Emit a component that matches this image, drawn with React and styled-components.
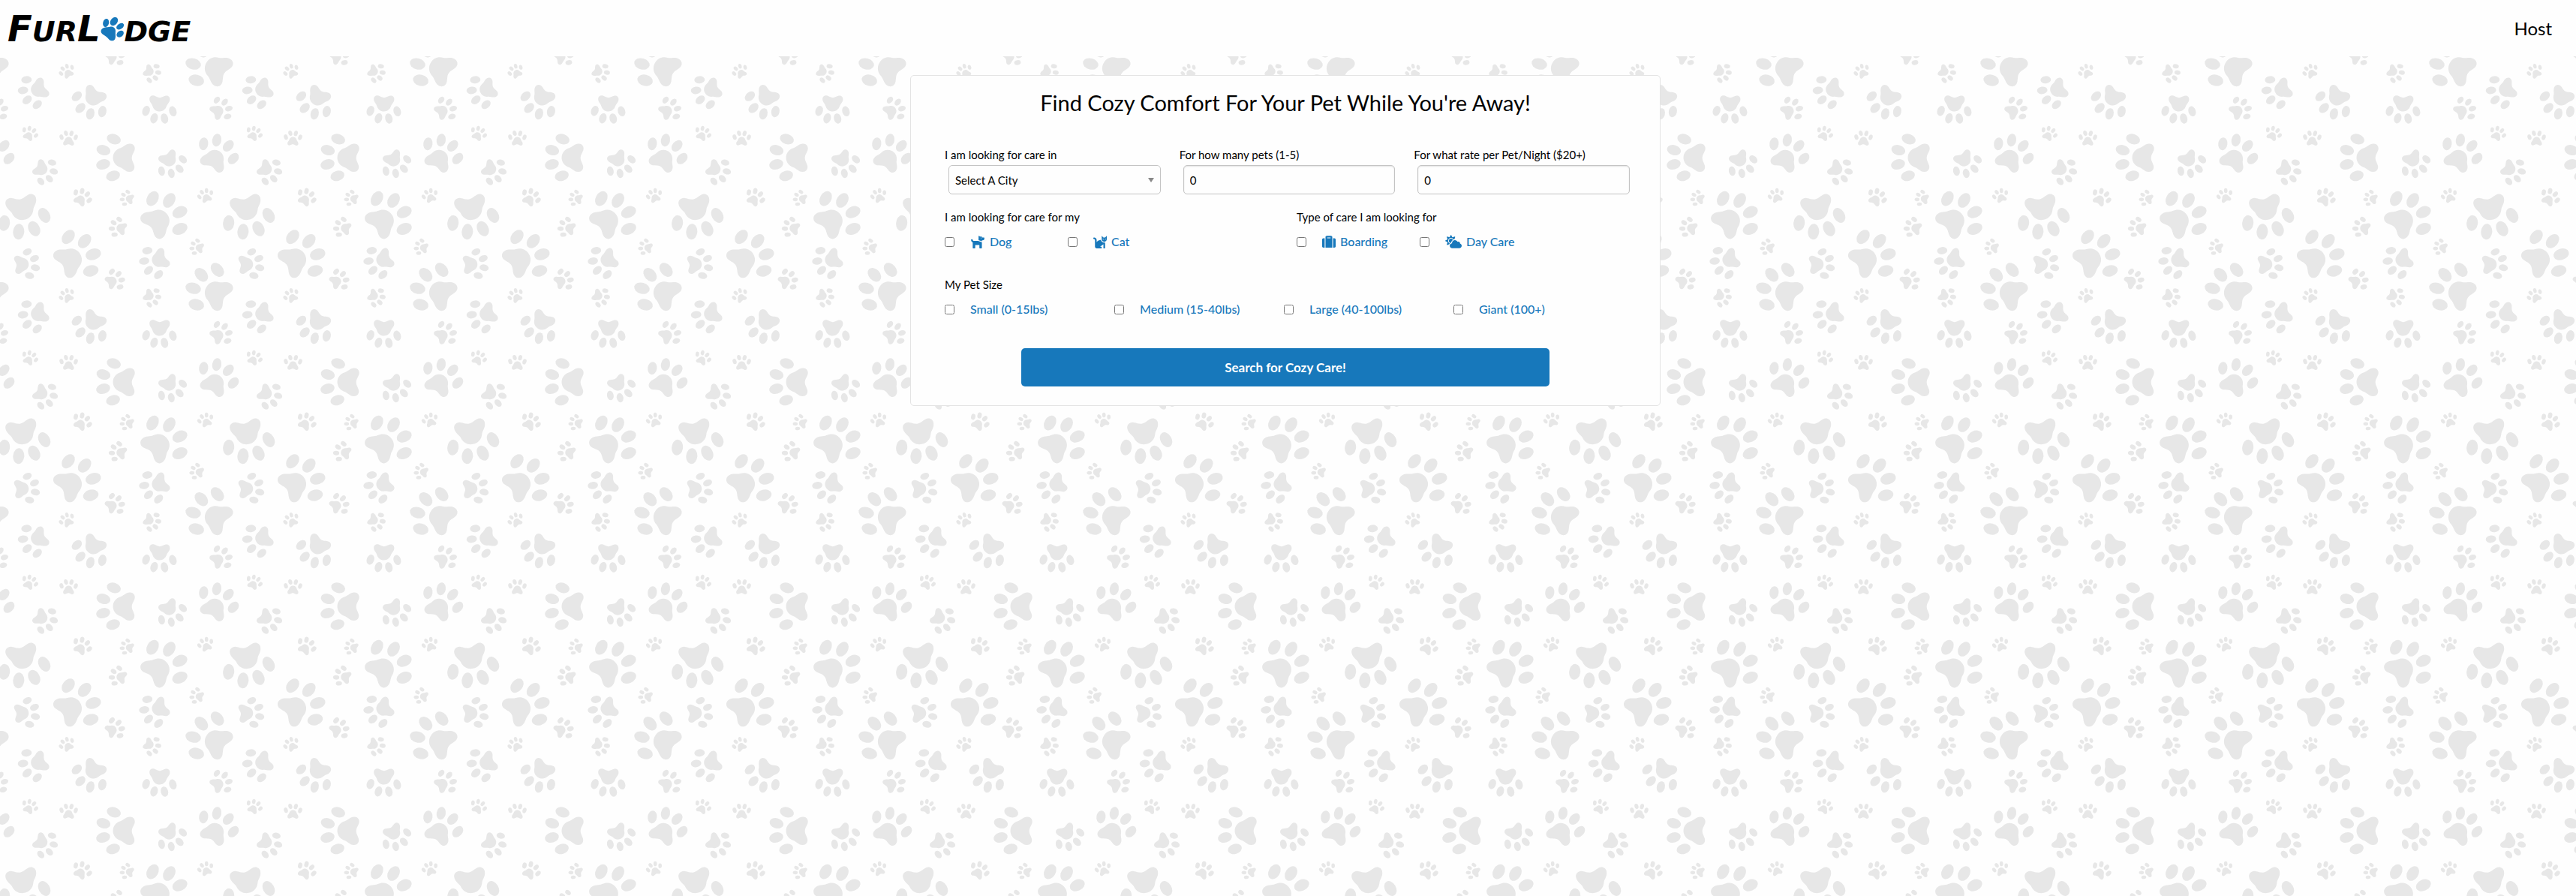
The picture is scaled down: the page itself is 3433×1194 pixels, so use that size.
import React from "react";
import styled, { createGlobalStyle } from "styled-components";
import { FaDog, FaCat, FaSuitcase, FaCloudSun } from "react-icons/fa";

const BLUE = "#1778bb";
const PRINT = "#e7e7e7";

const GlobalStyle = createGlobalStyle`
  *, *::before, *::after { box-sizing: border-box; }
  html, body, #root { height: 100%; }
  body {
    margin: 0;
    background: #fefefe;
    color: #000;
    font-family: "Gill Sans", "Gill Sans MT", Lato, sans-serif;
    font-size: 15px;
    line-height: 20px;
  }
  button, input, select { font: inherit; color: inherit; }
`;

/* ---------- paw print wallpaper ---------- */

const TILE = 299;

// Outer toes of each print, [leftX, leftY, rightX, rightY], in thirds of a pixel.
const PRINTS = [
  [149, 418, 106, 319],
  [244, 294, 288, 269],
  [447, 1086, 480, 1147],
  [626, 265, 597, 321],
  [785, 1218, 869, 1079],
  [409, 446, 307, 385],
  [691, 445, 584, 443],
  [867, 400, 910, 466],
  [97, 519, 144, 542],
  [246, 548, 303, 549],
  [452, 703, 455, 556],
  [731, 637, 646, 684],
  [814, 575, 933, 634],
  [208, 650, 163, 725],
  [303, 769, 357, 801],
  [498, 816, 511, 767],
  [610, 794, 719, 915],
  [797, 787, 845, 770],
  [177, 861, 17, 892],
  [458, 938, 477, 877],
  [273, 947, 363, 1083],
  [109, 1007, 118, 1102],
  [634, 1098, 589, 1002],
  [777, 1012, 790, 962],
];

const SHIFTS = [-2, -1, 0, 1].flatMap((y) => [-1, 0, 1].map((x) => [x * TILE, y * TILE]));

function placePrint([lx, ly, rx, ry]) {
  const angle = Math.atan2(ry - ly, rx - lx);
  const scale = Math.hypot(rx - lx, ry - ly) / 160 / 3;
  const x = (lx + rx) / 6 - Math.sin(angle) * 42 * scale;
  const y = (ly + ry) / 6 + Math.cos(angle) * 42 * scale;
  return `translate(${x} ${y}) rotate(${(angle * 180) / Math.PI}) scale(${scale})`;
}

function PawShape() {
  return (
    <>
      <path d="M0 -44 C20 -44 36 -32 42 -12 C46 2 60 10 61 28 C62 46 46 54 32 49 C18 44 12 38 0 38 C-12 38 -18 44 -32 49 C-46 54 -62 46 -61 28 C-60 10 -46 2 -42 -12 C-36 -32 -20 -44 0 -44 Z" />
      <ellipse rx="22" ry="31" transform="translate(-80 -42) rotate(-18)" />
      <ellipse rx="22" ry="31" transform="translate(-31 -86) rotate(-16)" />
      <ellipse rx="22" ry="31" transform="translate(31 -86) rotate(16)" />
      <ellipse rx="22" ry="31" transform="translate(80 -42) rotate(18)" />
    </>
  );
}

const WallpaperSvg = styled.svg`
  position: absolute;
  inset: 0;
  z-index: -1;
  width: 100%;
  height: 100%;
`;

function Wallpaper() {
  return (
    <WallpaperSvg aria-hidden="true">
      <defs>
        <g id="prints" fill={PRINT}>
          {PRINTS.map((p) => (
            <g key={p.join()} transform={placePrint(p)}>
              <PawShape />
            </g>
          ))}
        </g>
        <pattern id="paws" width={TILE} height={TILE} patternUnits="userSpaceOnUse">
          {SHIFTS.map(([x, y]) => (
            <use key={`${x},${y}`} href="#prints" x={x} y={y} />
          ))}
        </pattern>
      </defs>
      <rect width="100%" height="100%" fill="url(#paws)" />
    </WallpaperSvg>
  );
}

/* ---------- page frame ---------- */

const Page = styled.div`
  position: relative;
  z-index: 0;
  min-height: 100%;
  overflow: hidden;
`;

const Header = styled.header`
  display: flex;
  align-items: center;
  justify-content: space-between;
  height: 75px;
  padding: 0 32px 0 10px;
  background: #fefefe;
`;

const Logo = styled.a`
  display: flex;
  align-items: baseline;
  padding-top: 4px;
  color: #000;
  font-family: "DejaVu Sans", sans-serif;
  font-size: 38px;
  font-style: italic;
  font-weight: 900;
  line-height: 40px;
  text-decoration: none;
`;

const Capital = styled.span`
  font-size: 48px;
`;

const LogoPaw = styled.svg`
  width: 32px;
  height: 32px;
  fill: ${BLUE};
`;

// A plumper print than the wallpaper's: wide pad, toes set close to it.
function LogoPrint() {
  return (
    <LogoPaw viewBox="405 74 96 98" aria-hidden="true">
      <path d="M408 124 C414 113 430 116 442 113 C456 110 467 119 465 133 C464 144 467 153 463 163 C459 172 446 172 439 165 C432 158 428 153 418 147 C408 142 402 134 408 124 Z" />
      <ellipse cx="426" cy="97" rx="12" ry="17" transform="rotate(14 426 97)" />
      <ellipse cx="459" cy="91" rx="14" ry="19" transform="rotate(38 459 91)" />
      <ellipse cx="484" cy="111" rx="11" ry="17" transform="rotate(55 484 111)" />
      <ellipse cx="484" cy="142" rx="12" ry="16" transform="rotate(50 484 142)" />
    </LogoPaw>
  );
}

const NavLink = styled.a`
  color: #000;
  font-size: 24px;
  line-height: 32px;
  text-decoration: none;
`;

const Main = styled.main`
  display: flex;
  justify-content: center;
  padding: 25px 7px 25px 0;
`;

/* ---------- search card ---------- */

const Card = styled.form`
  width: 1000px;
  max-width: 100%;
  padding: 18px 30px 25px;
  border: 1px solid #e4e4e4;
  border-radius: 5px;
  background: #fefefe;
`;

const Title = styled.h1`
  margin: 0 0 41px;
  font-size: 29px;
  font-weight: 400;
  line-height: 36px;
  text-align: center;
`;

const Row = styled.div`
  display: flex;
  margin-bottom: ${(p) => p.$gap}px;
`;

const Column = styled.div`
  flex: 1;
  padding: 0 10px 0 15px;
`;

const Group = styled.fieldset`
  flex: 1;
  min-width: 0;
  margin: 0;
  padding: 0 15px;
  border: 0;
`;

const Caption = styled.legend`
  padding: 0;
  line-height: 20px;
`;

const FieldLabel = styled.label`
  display: block;
  line-height: 20px;
`;

const Field = styled.div`
  position: relative;
  margin: 4px 0 0 5px;
`;

const controlLook = `
  display: block;
  width: 100%;
  height: 39px;
  padding: 0 8px;
  border: 1px solid #c4c4c4;
  border-radius: 5px;
  background: #fefefe;
  line-height: 20px;
`;

const TextInput = styled.input`
  ${controlLook}
  box-shadow: inset 0 1px 2px rgba(0, 0, 0, 0.12);
`;

const SelectField = styled(Field)`
  &::after {
    content: "";
    position: absolute;
    top: 17px;
    right: 9px;
    border: 4px solid transparent;
    border-top: 6px solid #888;
    border-bottom: 0;
    pointer-events: none;
  }
`;

const Select = styled.select`
  ${controlLook}
  appearance: none;
`;

const Choices = styled.div`
  display: grid;
  grid-template-columns: ${(p) => p.$columns};
  margin-top: 11px;
`;

const Choice = styled.label`
  display: flex;
  align-items: center;
  gap: 21px;
  color: ${BLUE};
  font-size: 16px;
  font-weight: 500;
  line-height: 24px;
`;

const Checkbox = styled.input`
  width: 13px;
  height: 13px;
  margin: 0;
`;

const ChoiceText = styled.span`
  display: flex;
  align-items: center;
  gap: 6px;

  svg {
    width: ${(p) => p.$iconWidth}px;
    height: 18px;
  }
`;

const SearchButton = styled.button`
  display: block;
  width: 75%;
  height: 51px;
  margin: 0 auto;
  border: 0;
  border-radius: 5px;
  background: ${BLUE};
  color: #fff;
  font-size: 17px;
  font-weight: 700;
  cursor: pointer;
`;

function Option({ name, icon: Icon, iconWidth = 18, children }) {
  return (
    <Choice>
      <Checkbox type="checkbox" name={name} />
      <ChoiceText $iconWidth={iconWidth}>
        {Icon && <Icon aria-hidden="true" />}
        {children}
      </ChoiceText>
    </Choice>
  );
}

export default function App() {
  return (
    <>
      <GlobalStyle />
      <Page>
        <Wallpaper />
        <Header>
          <Logo href="#">
            <Capital>F</Capital>UR<Capital>L</Capital>
            <LogoPrint />
            DGE
          </Logo>
          <NavLink href="#">Host</NavLink>
        </Header>
        <Main>
          <Card onSubmit={(e) => e.preventDefault()}>
            <Title>Find Cozy Comfort For Your Pet While You're Away!</Title>
            <Row $gap={20}>
              <Column>
                <FieldLabel htmlFor="city">I am looking for care in</FieldLabel>
                <SelectField>
                  <Select id="city">
                    <option>Select A City</option>
                  </Select>
                </SelectField>
              </Column>
              <Column>
                <FieldLabel htmlFor="pets">For how many pets (1-5)</FieldLabel>
                <Field>
                  <TextInput id="pets" inputMode="numeric" defaultValue="0" />
                </Field>
              </Column>
              <Column>
                <FieldLabel htmlFor="rate">For what rate per Pet/Night ($20+)</FieldLabel>
                <Field>
                  <TextInput id="rate" inputMode="numeric" defaultValue="0" />
                </Field>
              </Column>
            </Row>
            <Row $gap={35}>
              <Group>
                <Caption>I am looking for care for my</Caption>
                <Choices $columns="164px 1fr">
                  <Option name="pet" icon={FaDog} iconWidth={20}>Dog</Option>
                  <Option name="pet" icon={FaCat}>Cat</Option>
                </Choices>
              </Group>
              <Group>
                <Caption>Type of care I am looking for</Caption>
                <Choices $columns="164px 1fr">
                  <Option name="care" icon={FaSuitcase}>Boarding</Option>
                  <Option name="care" icon={FaCloudSun} iconWidth={22}>Day Care</Option>
                </Choices>
              </Group>
            </Row>
            <Row $gap={40}>
              <Group>
                <Caption>My Pet Size</Caption>
                <Choices $columns="repeat(4, 226px)">
                  <Option name="size">Small (0-15lbs)</Option>
                  <Option name="size">Medium (15-40lbs)</Option>
                  <Option name="size">Large (40-100lbs)</Option>
                  <Option name="size">Giant (100+)</Option>
                </Choices>
              </Group>
            </Row>
            <SearchButton type="submit">Search for Cozy Care!</SearchButton>
          </Card>
        </Main>
      </Page>
    </>
  );
}
